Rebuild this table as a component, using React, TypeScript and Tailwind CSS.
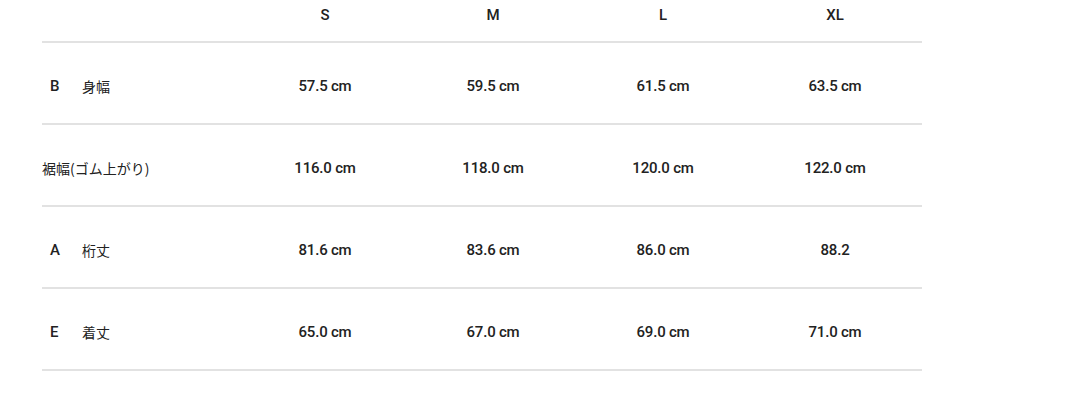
const sizes = ["S", "M", "L", "XL"];

const rows = [
  { code: "B", name: "身幅", values: ["57.5 cm", "59.5 cm", "61.5 cm", "63.5 cm"] },
  { code: "", name: "裾幅(ゴム上がり)", values: ["116.0 cm", "118.0 cm", "120.0 cm", "122.0 cm"] },
  { code: "A", name: "桁丈", values: ["81.6 cm", "83.6 cm", "86.0 cm", "88.2"] },
  { code: "E", name: "着丈", values: ["65.0 cm", "67.0 cm", "69.0 cm", "71.0 cm"] },
];

const cols = "grid grid-cols-[200px_166px_170px_170px_174px]";

export default function App() {
  return (
    <div className="w-[1080px] h-[404px] bg-white overflow-hidden">
      <div className="ml-[42px] w-[880px]">
        <div className={`${cols} h-[43px] border-b-2 border-[#e2e2e2] font-['Roboto',sans-serif] text-[15px] font-medium text-[#222] pt-[4px]`}>
          <div />
          {sizes.map((s) => (
            <div key={s} className="text-center">
              {s}
            </div>
          ))}
        </div>
        {rows.map((r) => (
          <div
            key={r.name}
            className={`${cols} h-[82px] items-center pt-[6px] border-b-2 border-[#e2e2e2]`}
          >
            <div className="flex items-center font-['Noto_Sans_CJK_JP',sans-serif] text-[14px] text-[#222]">
              {r.code ? (
                <>
                  <span className="w-[40px] pl-[8px] font-['Roboto',sans-serif] text-[15px] font-medium text-[#222]">
                    {r.code}
                  </span>
                  <span>{r.name}</span>
                </>
              ) : (
                <span>{r.name}</span>
              )}
            </div>
            {r.values.map((v, i) => (
              <div
                key={i}
                className="text-center font-['Roboto',sans-serif] text-[15px] font-medium text-[#222] tracking-[-0.2px]"
              >
                {v}
              </div>
            ))}
          </div>
        ))}
      </div>
    </div>
  );
}
